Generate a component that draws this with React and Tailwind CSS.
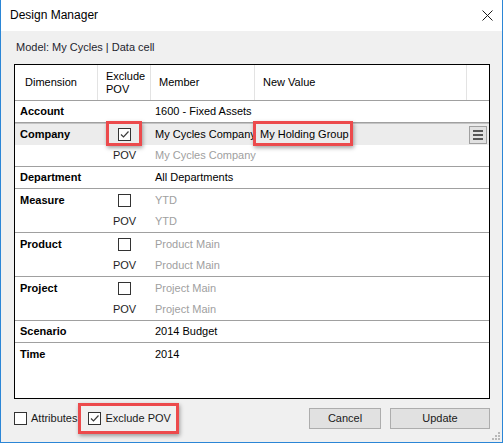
import React from "react";

function Check({ checked }) {
  return (
    <div className="w-[13px] h-[13px] border border-[#333333] bg-white flex items-center justify-center shrink-0">
      {checked && (
        <svg width="11" height="11" viewBox="0 0 11 11">
          <path d="M2 5.5 L4.5 8 L9.5 2.5" fill="none" stroke="#3c3c3c" strokeWidth="1.2" />
        </svg>
      )}
    </div>
  );
}

function Row({ name, check, pov, member, grey, value, last, highlight, menu }) {
  return (
    <div
      className={
        "flex h-[22px] items-center " +
        (last ? "border-b border-[#a0a0a0] " : "") +
        (highlight ? "bg-[#ececec] border-t border-t-[#c4c4c4] " : "")
      }
    >
      <div className="w-[83px] pl-[5px] font-bold text-black">{name}</div>
      <div className="w-[53px] flex justify-center">
        {check !== undefined && <Check checked={check} />}
        {pov && <span className="text-[#1e1e1e]">POV</span>}
      </div>
      <div className={"w-[104px] pl-[4px] whitespace-nowrap " + (grey ? "text-[#a0a0a0]" : "text-black")}>{member}</div>
      <div className="w-[212px] pl-[5px] text-black whitespace-nowrap">{value}</div>
      <div className="flex-1 flex items-center">
        {menu && (
          <div className="ml-[2px] w-[18px] h-[18px] border border-[#a0a0a0] bg-[#e1e1e1] flex flex-col items-center justify-center gap-[2px]">
            <div className="w-[10px] h-[2px] bg-[#555555]" />
            <div className="w-[10px] h-[2px] bg-[#555555]" />
            <div className="w-[10px] h-[2px] bg-[#555555]" />
          </div>
        )}
      </div>
    </div>
  );
}

function RedBox({ cls }) {
  return (
    <div className={"absolute border-[3px] border-[#ec4a4c] shadow-[1px_2px_4px_rgba(0,0,0,0.35)] " + cls} />
  );
}

export default function App() {
  return (
    <div
      className="relative w-[503px] h-[443px] border-x border-b border-[#2b86d6] bg-[#f0f0f0] flex flex-col text-[11px] leading-[13px]"
      style={{ fontFamily: '"Liberation Sans", Arial, sans-serif' }}
    >
      {/* Title bar */}
      <div className="h-[31px] bg-white flex items-center justify-between pl-[9px] pr-[9px]">
        <span className="text-[12px] text-black">Design Manager</span>
        <svg width="11" height="11" viewBox="0 0 11 11">
          <path d="M0.5 0.5 L10.5 10.5 M10.5 0.5 L0.5 10.5" stroke="#1a1a1a" strokeWidth="1" />
        </svg>
      </div>

      <div className="flex-1 flex flex-col pl-[13px] pr-[12px]">
        <div className="pt-[10px] pl-[2px] text-[#1f1f2f]">Model: My Cycles | Data cell</div>

        {/* Table */}
        <div className="mt-[10px] h-[335px] border border-black bg-white flex flex-col">
          <div className="flex h-[36px] border-b border-[#a0a0a0] text-black">
            <div className="w-[83px] border-r border-[#e3e3e3] pl-[10px] flex items-center">Dimension</div>
            <div className="w-[53px] border-r border-[#e3e3e3] pl-[8px] flex flex-col justify-center">
              <span>Exclude</span>
              <span>POV</span>
            </div>
            <div className="w-[104px] border-r border-[#e3e3e3] pl-[8px] flex items-center">Member</div>
            <div className="w-[212px] border-r border-[#e3e3e3] pl-[8px] flex items-center">New Value</div>
            <div className="flex-1" />
          </div>

          <Row name="Account" member="1600 - Fixed Assets" last />
          <Row name="Company" check={true} member="My Cycles Company" value="My Holding Group" highlight menu />
          <Row pov member="My Cycles Company" grey last />
          <Row name="Department" member="All Departments" last />
          <Row name="Measure" check={false} member="YTD" grey />
          <Row pov member="YTD" grey last />
          <Row name="Product" check={false} member="Product Main" grey />
          <Row pov member="Product Main" grey last />
          <Row name="Project" check={false} member="Project Main" grey />
          <Row pov member="Project Main" grey last />
          <Row name="Scenario" member="2014 Budget" last />
          <Row name="Time" member="2014" />
        </div>

        {/* Bottom bar */}
        <div className="mt-[9px] h-[21px] flex items-center text-[#1a1a1a]">
          <Check checked={false} />
          <span className="ml-[4px]">Attributes</span>
          <div className="ml-[11px]">
            <Check checked={true} />
          </div>
          <span className="ml-[4px]">Exclude POV</span>
          <div className="flex-1" />
          <button className="w-[72px] h-[21px] border border-[#adadad] bg-[#e1e1e1] text-[#1a1a1a] text-[11px]">Cancel</button>
          <button className="ml-[9px] w-[100px] h-[21px] border border-[#adadad] bg-[#e1e1e1] text-[#1a1a1a] text-[11px]">Update</button>
        </div>
      </div>

      {/* Annotation boxes */}
      <RedBox cls="left-[105px] top-[121px] w-[36px] h-[25px]" />
      <RedBox cls="left-[252px] top-[121px] w-[100px] h-[25px]" />
      <RedBox cls="left-[77px] top-[403px] w-[101px] h-[31px]" />

      {/* Resize grip */}
      <svg className="absolute right-[1px] bottom-[1px]" width="10" height="10" viewBox="0 0 10 10">
        <rect x="7" y="1" width="2" height="2" fill="#b8b8b8" />
        <rect x="4" y="4" width="2" height="2" fill="#b8b8b8" />
        <rect x="7" y="4" width="2" height="2" fill="#b8b8b8" />
        <rect x="1" y="7" width="2" height="2" fill="#b8b8b8" />
        <rect x="4" y="7" width="2" height="2" fill="#b8b8b8" />
        <rect x="7" y="7" width="2" height="2" fill="#b8b8b8" />
      </svg>
    </div>
  );
}
